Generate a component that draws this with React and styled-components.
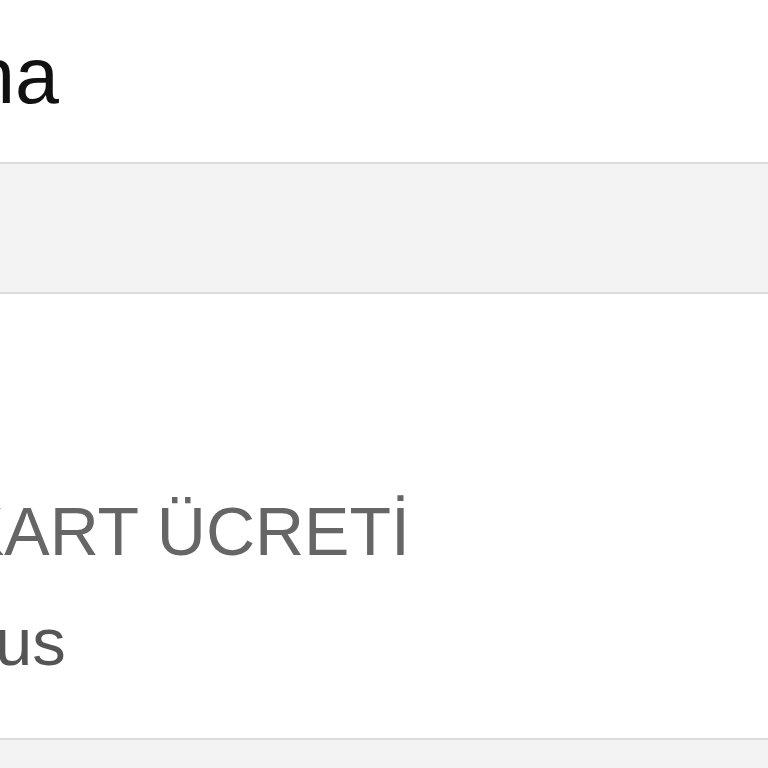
import styled, { createGlobalStyle } from 'styled-components';

const GlobalStyle = createGlobalStyle`
  html, body {
    margin: 0;
    padding: 0;
    background: #ffffff;
    overflow: hidden;
  }
  body {
    font-family: "Liberation Sans", Arial, Helvetica, sans-serif;
  }
`;

const Page = styled.div`
  width: 768px;
  height: 768px;
  overflow: hidden;
  display: flex;
  flex-direction: column;
`;

const Header = styled.header`
  height: 162px;
  padding-top: 36px;
  box-sizing: border-box;
  background: #ffffff;
`;

const Title = styled.h1`
  margin: 0;
  font-size: 79px;
  font-weight: 400;
  line-height: 1;
  color: #111111;
  white-space: nowrap;
  text-indent: -29px;
`;

const Band = styled.div`
  height: 132px;
  box-sizing: border-box;
  background: #f3f3f3;
  border-top: 2px solid #dcdcdc;
  border-bottom: 2px solid #dcdcdc;
`;

const Section = styled.section`
  height: 444px;
  box-sizing: border-box;
  padding-top: 203px;
  background: #ffffff;
  display: flex;
  flex-direction: column;
  gap: 43px;
`;

const Label = styled.div`
  font-size: ${(p) => p.size}px;
  line-height: 1;
  color: ${(p) => p.color};
  white-space: nowrap;
  text-indent: ${(p) => p.indent}px;
`;

const Footer = styled.div`
  flex: 1;
  background: #f3f3f3;
  border-top: 2px solid #dcdcdc;
`;

function App() {
  return (
    <>
      <GlobalStyle />
      <Page>
        <Header>
          <Title>na</Title>
        </Header>
        <Band />
        <Section>
          <Label size={68} color="#666666" indent={-41}>
            KART ÜCRETİ
          </Label>
          <Label size={67} color="#555555" indent={-5}>
            us
          </Label>
        </Section>
        <Footer />
      </Page>
    </>
  );
}

export default App;
